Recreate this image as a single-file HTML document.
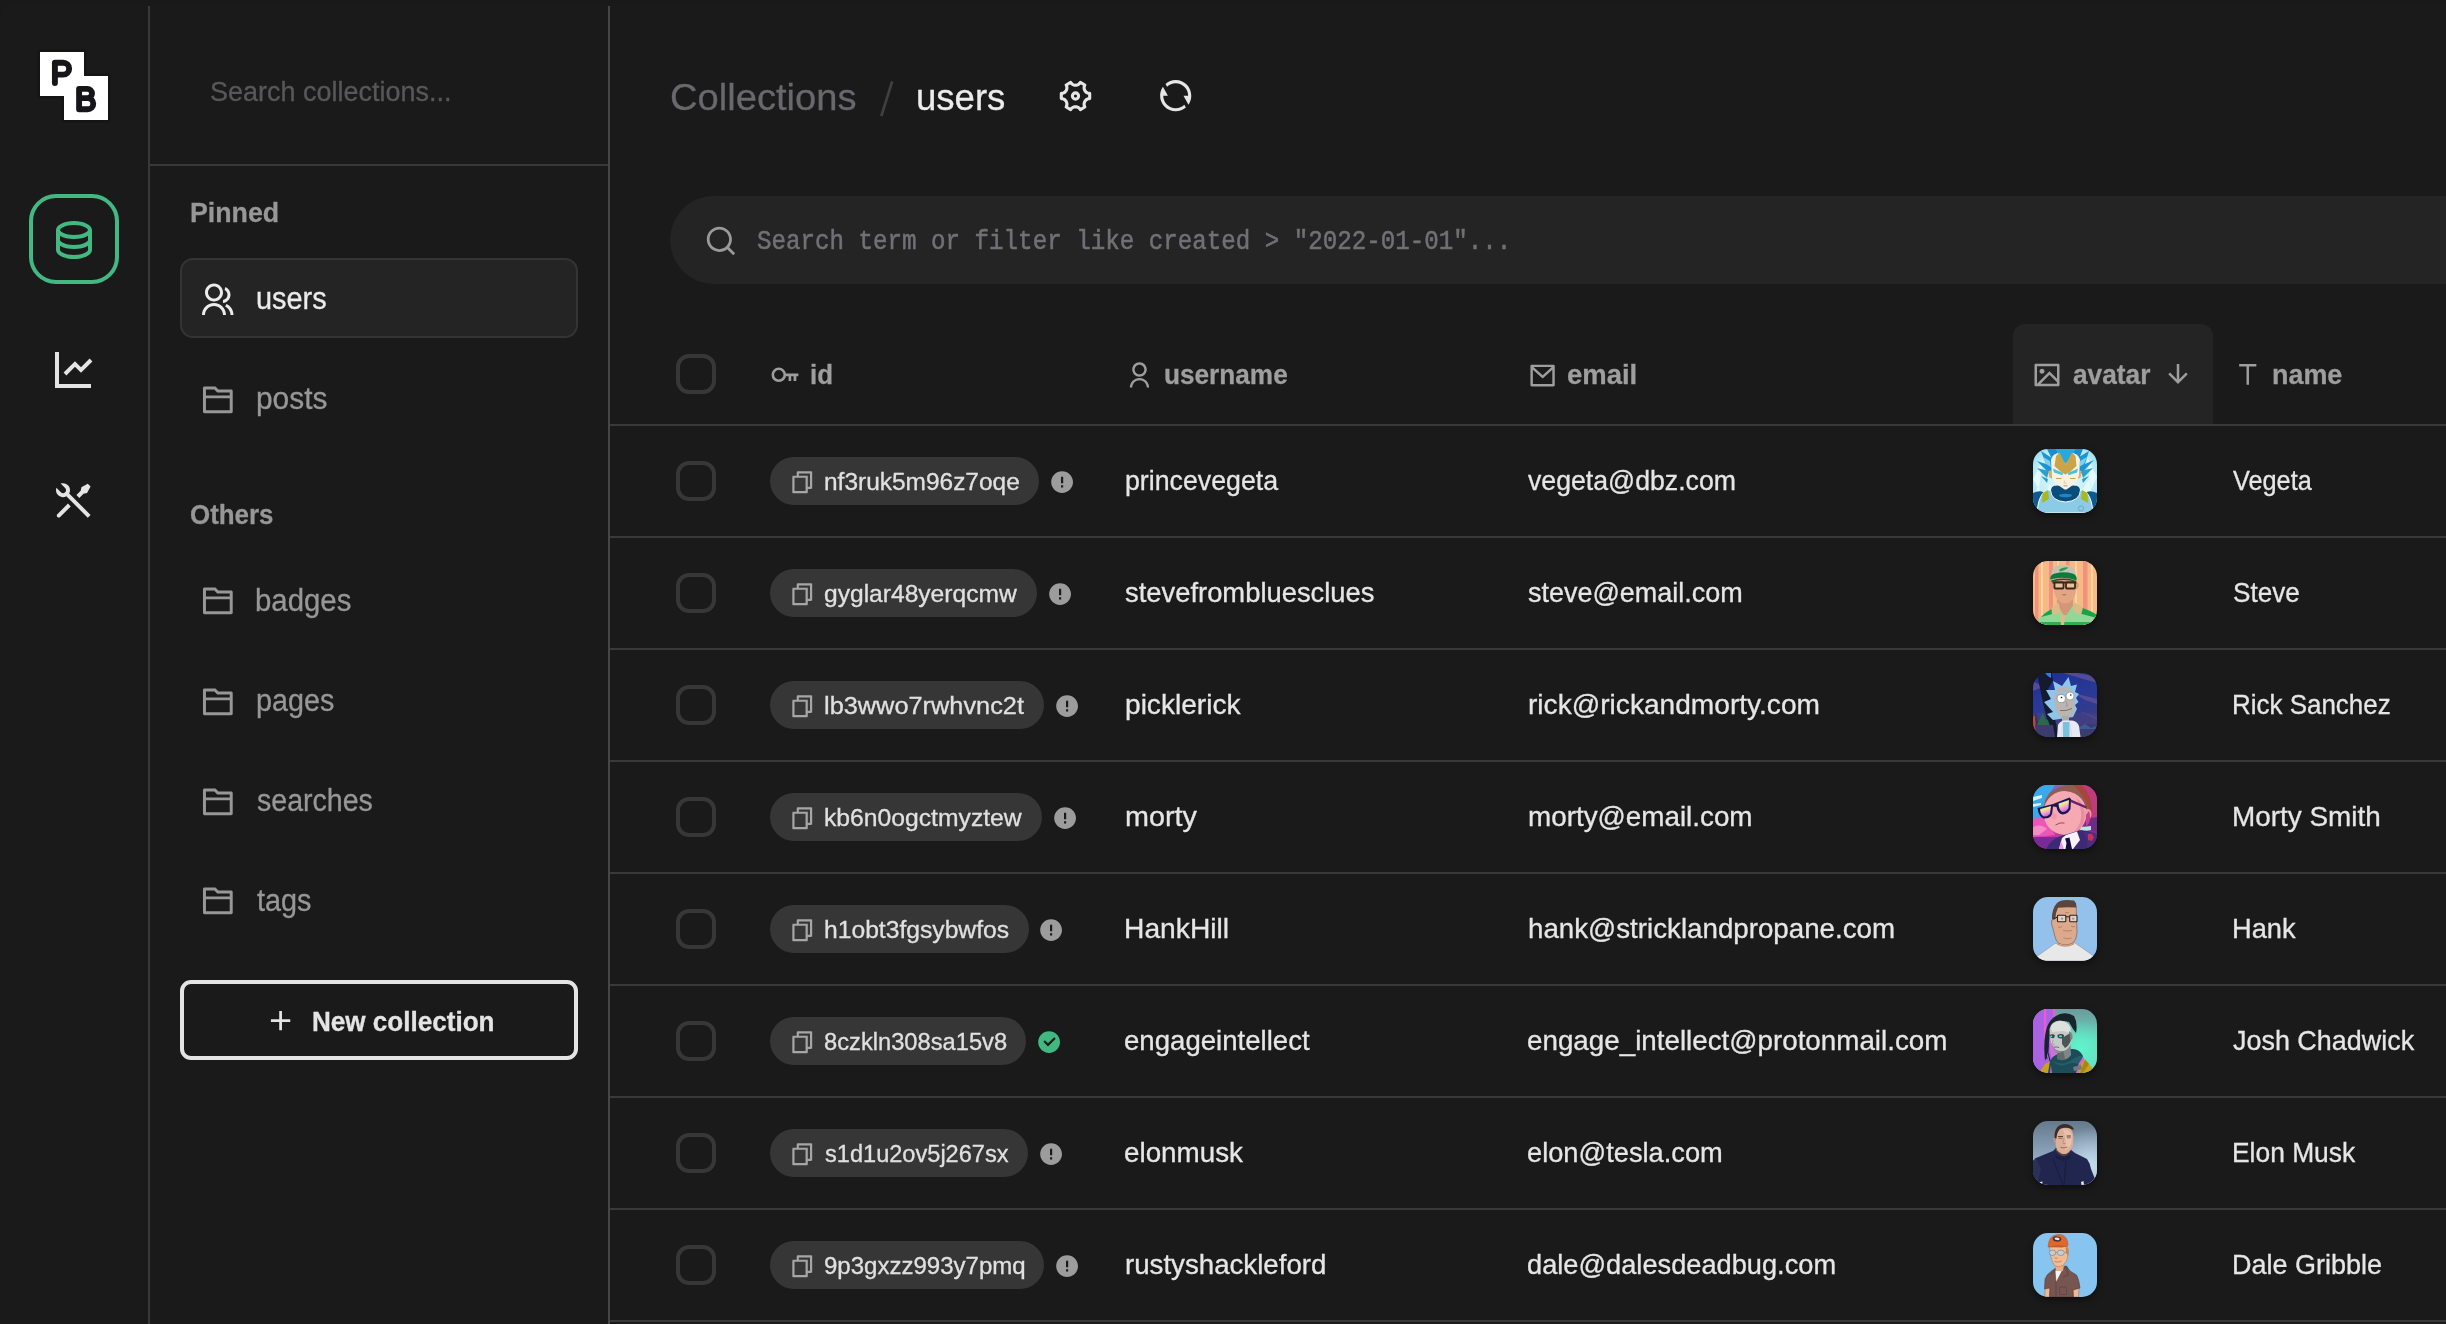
<!DOCTYPE html>
<html lang="en"><head><meta charset="utf-8"><meta name="viewport" content="width=2446"><title>users - PocketBase</title>
<style>
html,body{margin:0;padding:0;background:#1a1a1a;}
body{width:2446px;height:1324px;position:relative;overflow:hidden;font-family:"Liberation Sans", sans-serif;}
.b{position:absolute;box-sizing:border-box}
.i{position:absolute;display:block;overflow:visible}
.t{position:absolute;white-space:nowrap;line-height:1;transform-origin:0 0;display:block;-webkit-text-stroke:0.3px}
.m{font-family:"Liberation Mono", monospace;-webkit-text-stroke:0.55px}
.ln{position:absolute;background:#393939}
.cb{position:absolute;box-sizing:border-box;width:40px;height:40px;border:4px solid #373737;border-radius:13px;left:676px}
.pill{position:absolute;box-sizing:border-box;height:48px;border-radius:24px;background:#363636;left:770px}
.av{position:absolute;width:64px;height:64px;border-radius:15px;overflow:hidden;left:2033px;box-shadow:0 3px 7px rgba(0,0,0,.45)}
.av svg{display:block}

</style></head><body>
<div class="b" style="left:0;top:0;width:2446px;height:6px;background:#191919"></div>
<div class="b" style="left:0;top:6px;width:12px;height:12px;background:#191919"></div>
<div class="b" style="left:0;top:6px;width:24px;height:24px;background:#1a1a1a;border-top-left-radius:10px"></div>
<div class="ln" style="left:148px;top:6px;width:2px;height:1324px"></div>
<div class="ln" style="left:608px;top:6px;width:2px;height:1324px;background:#464646"></div>
<div class="ln" style="left:150px;top:164px;width:458px;height:2px"></div>
<svg class="i" style="left:36px;top:48px" width="76" height="76" viewBox="36 48 76 76"><path fill="#ffffff" stroke="#151517" stroke-width="5" stroke-linejoin="round" d="M40 52H84V76H108V120H64V96H40Z"/><path fill="#ffffff" d="M40 52H84V76H108V120H64V96H40Z"/><g fill="none" stroke="#16161a" stroke-width="5.9" stroke-linecap="round" stroke-linejoin="round"><path d="M54.9 83.1V62.7H63.2A5.95 5.95 0 0 1 63.2 74.6H54.9"/><path d="M79.1 88.9H87.4A4.6 4.6 0 0 1 87.4 98.1H79.1M79.1 98.1H87.7A5.55 5.55 0 0 1 87.7 109.2H79.1V88.9"/></g></svg>
<div class="b" style="left:29px;top:194px;width:90px;height:90px;border:4.3px solid #43b883;border-radius:27px"></div>
<svg class="i" style="left:50.00px;top:215.00px" width="48.00" height="48.00" viewBox="0 0 24 24"><path fill="#43b883"  d="M5 12.5C5 12.8134 5.46101 13.3584 6.53047 13.8931C7.91405 14.5849 9.87677 15 12 15C14.1232 15 16.0859 14.5849 17.4695 13.8931C18.539 13.3584 19 12.8134 19 12.5V10.3287C17.35 11.3482 14.8273 12 12 12C9.17273 12 6.64996 11.3482 5 10.3287V12.5ZM19 15.3287C17.35 16.3482 14.8273 17 12 17C9.17273 17 6.64996 16.3482 5 15.3287V17.5C5 17.8134 5.46101 18.3584 6.53047 18.8931C7.91405 19.5849 9.87677 20 12 20C14.1232 20 16.0859 19.5849 17.4695 18.8931C18.539 18.3584 19 17.8134 19 17.5V15.3287ZM3 17.5V7.5C3 5.01472 7.02944 3 12 3C16.9706 3 21 5.01472 21 7.5V17.5C21 19.9853 16.9706 22 12 22C7.02944 22 3 19.9853 3 17.5ZM12 10C14.1232 10 16.0859 9.58492 17.4695 8.89313C18.539 8.3584 19 7.81342 19 7.5C19 7.18658 18.539 6.6416 17.4695 6.10687C16.0859 5.41508 14.1232 5 12 5C9.87677 5 7.91405 5.41508 6.53047 6.10687C5.46101 6.6416 5 7.18658 5 7.5C5 7.81342 5.46101 8.3584 6.53047 8.89313C7.91405 9.58492 9.87677 10 12 10Z"/></svg>
<svg class="i" style="left:49.00px;top:346.00px" width="48.00" height="48.00" viewBox="0 0 24 24"><path fill="#e4e4e4"  d="M5 3V19H21V21H3V3H5ZM20.2929 6.29289L21.7071 7.70711L16 13.4142L13 10.415L8.70711 14.7071L7.29289 13.2929L13 7.58579L16 10.585L20.2929 6.29289Z"/></svg>
<svg class="i" style="left:50.00px;top:476.50px" width="48.00" height="48.00" viewBox="0 0 24 24"><path fill="#e4e4e4"  d="M5.32943 3.27158C6.56252 2.8332 7.9923 3.10749 8.97927 4.09446C10.1002 5.21537 10.3019 6.90741 9.5843 8.23385L20.293 18.9437L18.8788 20.3579L8.16982 9.64875C6.84325 10.3669 5.15069 10.1654 4.02952 9.04421C3.04227 8.05696 2.7681 6.62665 3.20701 5.39332L5.44373 7.63C6.02952 8.21578 6.97927 8.21578 7.56505 7.63C8.15084 7.04421 8.15084 6.09446 7.56505 5.50868L5.32943 3.27158ZM15.6968 5.15512L18.8788 3.38736L20.293 4.80157L18.5252 7.98355L16.7574 8.3371L14.6361 10.4584L13.2219 9.04421L15.3432 6.92289L15.6968 5.15512ZM8.97927 13.2868L10.3935 14.7011L5.09018 20.0044C4.69966 20.3949 4.06649 20.3949 3.67597 20.0044C3.31334 19.6417 3.28744 19.0699 3.59826 18.6774L3.67597 18.5902L8.97927 13.2868Z"/></svg>
<div class="b" style="left:180px;top:258px;width:398px;height:80px;border:2px solid #343434;border-radius:13px;background:#242424"></div>
<svg class="i" style="left:199.00px;top:282.25px" width="36.00" height="36.00" viewBox="0 0 24 24"><path fill="#ececec"  d="M2 22C2 17.5817 5.58172 14 10 14C14.4183 14 18 17.5817 18 22H16C16 18.6863 13.3137 16 10 16C6.68629 16 4 18.6863 4 22H2ZM10 13C6.685 13 4 10.315 4 7C4 3.685 6.685 1 10 1C13.315 1 16 3.685 16 7C16 10.315 13.315 13 10 13ZM10 11C12.21 11 14 9.21 14 7C14 4.79 12.21 3 10 3C7.79 3 6 4.79 6 7C6 9.21 7.79 11 10 11ZM18.2837 14.7028C21.0644 15.9561 23 18.752 23 22H21C21 19.564 19.5483 17.4671 17.4628 16.5271L18.2837 14.7028ZM17.5962 3.41321C19.5944 4.23703 21 6.20361 21 8.5C21 11.3702 18.8042 13.7252 16 13.9776V11.9646C17.6967 11.7222 19 10.2636 19 8.5C19 7.11935 18.2016 5.92603 17.041 5.35635L17.5962 3.41321Z"/></svg>
<svg class="i" style="left:200.10px;top:381.50px" width="35.70" height="35.70" viewBox="0 0 24 24"><path fill="#979797"  d="M12.4142 5H21C21.5523 5 22 5.44772 22 6V20C22 20.5523 21.5523 21 21 21H3C2.44772 21 2 20.5523 2 20V4C2 3.44772 2.44772 3 3 3H10.4142L12.4142 5ZM20 11H4V19H20V11ZM20 9V7H11.5858L9.58579 5H4V9H20Z"/></svg>
<svg class="i" style="left:200.10px;top:583.20px" width="35.70" height="35.70" viewBox="0 0 24 24"><path fill="#979797"  d="M12.4142 5H21C21.5523 5 22 5.44772 22 6V20C22 20.5523 21.5523 21 21 21H3C2.44772 21 2 20.5523 2 20V4C2 3.44772 2.44772 3 3 3H10.4142L12.4142 5ZM20 11H4V19H20V11ZM20 9V7H11.5858L9.58579 5H4V9H20Z"/></svg>
<svg class="i" style="left:200.10px;top:683.70px" width="35.70" height="35.70" viewBox="0 0 24 24"><path fill="#979797"  d="M12.4142 5H21C21.5523 5 22 5.44772 22 6V20C22 20.5523 21.5523 21 21 21H3C2.44772 21 2 20.5523 2 20V4C2 3.44772 2.44772 3 3 3H10.4142L12.4142 5ZM20 11H4V19H20V11ZM20 9V7H11.5858L9.58579 5H4V9H20Z"/></svg>
<svg class="i" style="left:200.10px;top:783.70px" width="35.70" height="35.70" viewBox="0 0 24 24"><path fill="#979797"  d="M12.4142 5H21C21.5523 5 22 5.44772 22 6V20C22 20.5523 21.5523 21 21 21H3C2.44772 21 2 20.5523 2 20V4C2 3.44772 2.44772 3 3 3H10.4142L12.4142 5ZM20 11H4V19H20V11ZM20 9V7H11.5858L9.58579 5H4V9H20Z"/></svg>
<svg class="i" style="left:200.10px;top:883.40px" width="35.70" height="35.70" viewBox="0 0 24 24"><path fill="#979797"  d="M12.4142 5H21C21.5523 5 22 5.44772 22 6V20C22 20.5523 21.5523 21 21 21H3C2.44772 21 2 20.5523 2 20V4C2 3.44772 2.44772 3 3 3H10.4142L12.4142 5ZM20 11H4V19H20V11ZM20 9V7H11.5858L9.58579 5H4V9H20Z"/></svg>
<div class="b" style="left:180px;top:980px;width:398px;height:80px;border:4.2px solid #e4e4e4;border-radius:11px"></div>
<svg class="i" style="left:263.65px;top:1004.00px" width="33.20" height="33.20" viewBox="0 0 24 24"><path fill="#e4e4e4"  d="M11 11V5H13V11H19V13H13V19H11V13H5V11H11Z"/></svg>
<svg class="i" style="left:870px;top:70px" width="40" height="60" viewBox="870 70 40 60"><path d="M892.2 81.3L881.3 116.2" stroke="#404043" stroke-width="2.7" fill="none"/></svg>
<svg class="i" style="left:0;top:0" width="2446" height="1324" viewBox="0 0 2446 1324"><path d="M1089.70 98.60 L1088.87 98.66 L1088.05 98.85 L1087.27 99.15 L1086.55 99.57 L1085.89 100.09 L1085.32 100.71 L1084.85 101.40 L1084.49 102.15 L1084.24 102.95 L1084.12 103.78 L1084.12 104.62 L1084.24 105.44 L1084.49 106.24 L1084.85 107.00 L1080.35 109.60 L1079.88 108.91 L1079.31 108.29 L1078.65 107.77 L1077.93 107.35 L1077.15 107.05 L1076.33 106.86 L1075.50 106.80 L1074.67 106.86 L1073.85 107.05 L1073.07 107.35 L1072.35 107.77 L1071.69 108.29 L1071.12 108.91 L1070.65 109.60 L1066.15 107.00 L1066.51 106.24 L1066.76 105.44 L1066.88 104.62 L1066.88 103.78 L1066.76 102.95 L1066.51 102.15 L1066.15 101.40 L1065.68 100.71 L1065.11 100.09 L1064.45 99.57 L1063.73 99.15 L1062.95 98.85 L1062.13 98.66 L1061.30 98.60 L1061.30 93.40 L1062.13 93.34 L1062.95 93.15 L1063.73 92.85 L1064.45 92.43 L1065.11 91.91 L1065.68 91.29 L1066.15 90.60 L1066.51 89.85 L1066.76 89.05 L1066.88 88.22 L1066.88 87.38 L1066.76 86.56 L1066.51 85.76 L1066.15 85.00 L1070.65 82.40 L1071.12 83.09 L1071.69 83.71 L1072.35 84.23 L1073.07 84.65 L1073.85 84.95 L1074.67 85.14 L1075.50 85.20 L1076.33 85.14 L1077.15 84.95 L1077.93 84.65 L1078.65 84.23 L1079.31 83.71 L1079.88 83.09 L1080.35 82.40 L1084.85 85.00 L1084.49 85.76 L1084.24 86.56 L1084.12 87.38 L1084.12 88.22 L1084.24 89.05 L1084.49 89.85 L1084.85 90.60 L1085.32 91.29 L1085.89 91.91 L1086.55 92.43 L1087.27 92.85 L1088.05 93.15 L1088.87 93.34 L1089.70 93.40Z" fill="none" stroke="#e6e6e6" stroke-width="3.1" stroke-linejoin="round"/><circle cx="1075.5" cy="96" r="3.1" fill="none" stroke="#e6e6e6" stroke-width="3.1"/></svg>
<svg class="i" style="left:1156.80px;top:77.20px" width="37.40" height="37.40" viewBox="0 0 24 24"><path fill="#e6e6e6"  d="M5.46257 4.43262C7.21556 2.91688 9.5007 2 12 2C17.5228 2 22 6.47715 22 12C22 14.1361 21.3302 16.1158 20.1892 17.7406L17 12H20C20 7.58172 16.4183 4 12 4C9.84982 4 7.89777 4.84827 6.46023 6.22842L5.46257 4.43262ZM18.5374 19.5674C16.7844 21.0831 14.4993 22 12 22C6.47715 22 2 17.5228 2 12C2 9.86386 2.66979 7.88416 3.8108 6.25944L7 12H4C4 16.4183 7.58172 20 12 20C14.1502 20 16.1022 19.1517 17.5398 17.7716L18.5374 19.5674Z"/></svg>
<div class="b" style="left:670px;top:196px;width:2446px;height:88px;border-radius:44px;background:#242424"></div>
<svg class="i" style="left:703.60px;top:224.20px" width="33.50" height="33.50" viewBox="0 0 24 24"><path fill="#9a9a9a"  d="M18.031 16.6168L22.3137 20.8995L20.8995 22.3137L16.6168 18.031C15.0769 19.263 13.124 20 11 20C6.032 20 2 15.968 2 11C2 6.032 6.032 2 11 2C15.968 2 20 6.032 20 11C20 13.124 19.263 15.0769 18.031 16.6168ZM16.0247 15.8748C17.2475 14.6146 18 12.8956 18 11C18 7.1325 14.8675 4 11 4C7.1325 4 4 7.1325 4 11C4 14.8675 7.1325 18 11 18C12.8956 18 14.6146 17.2475 15.8748 16.0247L16.0247 15.8748Z"/></svg>
<div class="b" style="left:2013px;top:324px;width:200px;height:101px;background:#242424;border-radius:12px 12px 0 0"></div>
<div class="ln" style="left:610px;top:424px;width:2446px;height:2px"></div>
<div class="ln" style="left:610px;top:536px;width:2446px;height:2px"></div>
<div class="ln" style="left:610px;top:648px;width:2446px;height:2px"></div>
<div class="ln" style="left:610px;top:760px;width:2446px;height:2px"></div>
<div class="ln" style="left:610px;top:872px;width:2446px;height:2px"></div>
<div class="ln" style="left:610px;top:984px;width:2446px;height:2px"></div>
<div class="ln" style="left:610px;top:1096px;width:2446px;height:2px"></div>
<div class="ln" style="left:610px;top:1208px;width:2446px;height:2px"></div>
<div class="ln" style="left:610px;top:1320px;width:2446px;height:2px"></div>
<svg class="i" style="left:768px;top:362px" width="36" height="26" viewBox="768 362 36 26"><circle cx="778.8" cy="374.8" r="6.0" fill="none" stroke="#9e9e9e" stroke-width="2.6"/><path d="M785.4 373.4H798.4V376.2H796.3V381H793.6V376.2H791.2V381H788.6V376.2H785.4Z" fill="#9e9e9e"/></svg>
<svg class="i" style="left:1124.75px;top:360.60px" width="29.00" height="29.00" viewBox="0 0 24 24"><path fill="#9e9e9e"  d="M4 22C4 17.5817 7.58172 14 12 14C16.4183 14 20 17.5817 20 22H18C18 18.6863 15.3137 16 12 16C8.68629 16 6 18.6863 6 22H4ZM12 13C8.685 13 6 10.315 6 7C6 3.685 8.685 1 12 1C15.315 1 18 3.685 18 7C18 10.315 15.315 13 12 13ZM12 11C14.21 11 16 9.21 16 7C16 4.79 14.21 3 12 3C9.79 3 8 4.79 8 7C8 9.21 9.79 11 12 11Z"/></svg>
<svg class="i" style="left:1527.90px;top:360.70px" width="29.20" height="29.20" viewBox="0 0 24 24"><path fill="#9e9e9e"  d="M3 3H21C21.5523 3 22 3.44772 22 4V20C22 20.5523 21.5523 21 21 21H3C2.44772 21 2 20.5523 2 20V4C2 3.44772 2.44772 3 3 3ZM20 7.23792L12.0718 14.338L4 7.21594V19H20V7.23792ZM4.51146 5L12.0619 11.662L19.501 5H4.51146Z"/></svg>
<svg class="i" style="left:2032.20px;top:360.30px" width="30.00" height="30.00" viewBox="0 0 24 24"><path fill="#9e9e9e"  d="M4.82843 21L4.80799 21.0204L4.78752 21H2.99168C2.44407 21 2 20.5551 2 20.0066V3.9934C2 3.44476 2.45531 3 2.9918 3H21.0082C21.556 3 22 3.44495 22 3.9934V20.0066C22 20.5552 21.5447 21 21.0082 21H4.82843ZM20 15V5H4V19L14 9L20 15ZM20 17.8284L14 11.8284L6.82843 19H20V17.8284ZM8 11C6.89543 11 6 10.1046 6 9C6 7.89543 6.89543 7 8 7C9.10457 7 10 7.89543 10 9C10 10.1046 9.10457 11 8 11Z"/></svg>
<svg class="i" style="left:2163.30px;top:359.30px" width="30.00" height="30.00" viewBox="0 0 24 24"><path fill="#9e9e9e"  d="M13.0001 16.1716L18.3641 10.8076L19.7783 12.2218L12.0001 20L4.22192 12.2218L5.63614 10.8076L11.0001 16.1716V4H13.0001V16.1716Z"/></svg>
<svg class="i" style="left:2232.80px;top:359.30px" width="29.50" height="29.50" viewBox="0 0 24 24"><path fill="#9e9e9e"  d="M13 6V21H11V6H5V4H19V6H13Z"/></svg>
<div class="cb" style="top:354px"></div>
<div class="cb" style="top:461px"></div>
<div class="pill" style="top:457px;width:268.9px"></div>
<svg class="i" style="left:788.60px;top:468.50px" width="26.50" height="26.50" viewBox="0 0 24 24"><path fill="#a6a6a6"  d="M6.9998 6V3C6.9998 2.44772 7.44752 2 7.9998 2H19.9998C20.5521 2 20.9998 2.44772 20.9998 3V17C20.9998 17.5523 20.5521 18 19.9998 18H16.9998V20.9991C16.9998 21.5519 16.5499 22 15.993 22H4.00666C3.45059 22 3 21.5554 3 20.9991L3.0026 7.00087C3.0027 6.44811 3.45264 6 4.00942 6H6.9998ZM5.00242 8L5.00019 20H14.9998V8H5.00242ZM8.9998 6H16.9998V16H18.9998V4H8.9998V6Z"/></svg>
<svg class="i" style="left:1048.70px;top:469.00px" width="26.20" height="26.20" viewBox="0 0 24 24"><path fill="#9c9c9c"  d="M12 22C6.47715 22 2 17.5228 2 12C2 6.47715 6.47715 2 12 2C17.5228 2 22 6.47715 22 12C22 17.5228 17.5228 22 12 22ZM11 15V17H13V15H11ZM11 7V13H13V7H11Z"/></svg>
<div class="av" style="top:449px"><svg width="64" height="64" viewBox="0 0 64 64"><defs><radialGradient id="vg" cx=".5" cy=".45" r=".75"><stop offset="0" stop-color="#e6fbff"/><stop offset=".6" stop-color="#bfeef8"/><stop offset="1" stop-color="#6fd0ec"/></radialGradient></defs><rect width="64" height="64" fill="url(#vg)"/><path d="M0 30L10 10L6 40ZM64 28L54 8L58 40ZM12 64L16 34L22 44ZM50 40L56 30L60 52ZM0 50L6 36L8 56Z" fill="#f2fdff" opacity=".7"/><path d="M19 27L4 12L13 15L8 2L19 9L21 0H44L46 8L56 2L52 15L61 11L46 27L47 10L40 3L32.500 15L25 3L18 10Z" fill="#1e95d0"/><path d="M14 0H50L46 10L40 3L32.500 15L25 3L19 10Z" fill="#1b8ccc"/><path d="M22 0L27 6L32.500 15L38 6L43 0Z" fill="#2aa8dc"/><path d="M16 22L4 19L14 29ZM48 22L60 19L50 29ZM15 30L8 27L14 34ZM49 30L56 27L50 34Z" fill="#2c9ed0"/><path d="M10 8L13 15L18 18L17 12ZM54 8L51 15L46 18L47 12Z" fill="#7fd0ee"/><path d="M0 44Q6 41 10 43L7 64H0ZM64 44Q58 41 54 43L57 64H64Z" fill="#0f5a8c"/><path d="M4 64Q5 50 10 44L15 41L49 41L54 44Q59 50 60 64Z" fill="#8ccbe6" stroke="#f4ffff" stroke-width="1"/><path d="M9.500 44L15 41L16 50L9 54ZM54.500 44L49 41L48 50L55 54Z" fill="#a9b820"/><path d="M17.500 41Q18 36 24 36H41Q47 36 47.500 41Q47 52 32.500 53Q18 52 17.500 41Z" fill="#0a4c7c" stroke="#f4ffff" stroke-width="1"/><ellipse cx="32.500" cy="46.500" rx="6.500" ry="1.800" fill="#1f86c4"/><path d="M15.500 22L19 21L19 30L16 28ZM48.500 22L45 21L45 30L48 28Z" fill="#d8b070"/><path d="M18.500 12Q18 6 24 4.500L32.500 15L41 4.500Q47 6 46.500 12L46 26Q44.500 32 40 36L33.500 40.500H31.500L25 36Q20.500 32 19 26Z" fill="#f8f1de"/><path d="M23 7L26.500 3.500L32.500 15.500L39 3.500L42.500 7L43.500 17L37 23L32.500 25.500L28 23L21.500 17Z" fill="#c9a449"/><path d="M20 19.500L30 24L29.500 26.200L21 23.500ZM45 19.500L35 24L35.500 26.200L44 23.500Z" fill="#41c3e4"/><path d="M23 29.500H28.500M37 29.500H42.500" stroke="#c9a449" stroke-width="1"/><path d="M31.500 31.500L31 34H33.500" stroke="#c9b28a" stroke-width=".6" fill="none"/><path d="M30.500 36.800H34.500" stroke="#b98f6a" stroke-width=".9"/><circle cx="48" cy="59.500" r="2.600" fill="none" stroke="#5f93a8" stroke-width=".6"/></svg></div>
<div class="cb" style="top:573px"></div>
<div class="pill" style="top:569px;width:266.8px"></div>
<svg class="i" style="left:788.60px;top:580.50px" width="26.50" height="26.50" viewBox="0 0 24 24"><path fill="#a6a6a6"  d="M6.9998 6V3C6.9998 2.44772 7.44752 2 7.9998 2H19.9998C20.5521 2 20.9998 2.44772 20.9998 3V17C20.9998 17.5523 20.5521 18 19.9998 18H16.9998V20.9991C16.9998 21.5519 16.5499 22 15.993 22H4.00666C3.45059 22 3 21.5554 3 20.9991L3.0026 7.00087C3.0027 6.44811 3.45264 6 4.00942 6H6.9998ZM5.00242 8L5.00019 20H14.9998V8H5.00242ZM8.9998 6H16.9998V16H18.9998V4H8.9998V6Z"/></svg>
<svg class="i" style="left:1046.60px;top:581.00px" width="26.20" height="26.20" viewBox="0 0 24 24"><path fill="#9c9c9c"  d="M12 22C6.47715 22 2 17.5228 2 12C2 6.47715 6.47715 2 12 2C17.5228 2 22 6.47715 22 12C22 17.5228 17.5228 22 12 22ZM11 15V17H13V15H11ZM11 7V13H13V7H11Z"/></svg>
<div class="av" style="top:561px"><svg width="64" height="64" viewBox="0 0 64 64"><rect width="64" height="64" fill="#f8ba84"/><path d="M2 0h3.500v64H2zM16 0h4v64h-4zM33 0h3.500v64H33zM50 0h4.500v64H50z" fill="#f0927c"/><path d="M8 0h2v64H8zM24 0h2v64h-2zM42 0h2v64h-2zM58 0h2v64h-2z" fill="#fdd3a2"/><path d="M24 36H40V54H24Z" fill="#d49676"/><path d="M3 64Q5 56 17 49L25 45L32 56L41 43L50 47Q60 51 64 54V64Z" fill="#8fd896"/><path d="M17 49L25 45L27 51L8 56Q11 52 17 49ZM41 43L50 47Q60 51 64 54V57L45 52Z" fill="#19a349"/><path d="M3 64L4 61H64V64Z" fill="#2cae55"/><path d="M18.500 47L25.500 41.500L28 52L19 54ZM41 41L50 46.500L48 54L40 50Z" fill="#dcbb8b"/><path d="M27 52L32 55L31 64H28Z" fill="#dcbb8b"/><path d="M28 46L32 55L36 46Z" fill="#d49676"/><path d="M20.500 18Q20 14 32 14Q43.500 14 43.500 19L43 30Q42 37 37 41Q32 44 27 41Q22 37 21 30Z" fill="#e3a685"/><path d="M19 22Q18 22 18.500 26L21 29V22ZM45 22Q46 22 45.500 26L43 29V22Z" fill="#d99878"/><path d="M18.500 16Q17.500 4 30.500 3.800Q43.500 4 42.800 16Z" fill="#c3c2b5"/><path d="M17.300 18.500Q16.500 13.500 23 12.300Q31 10.200 39.500 12.500Q44.500 14 43.600 19.500Q31 14.800 17.300 18.500Z" fill="#0b7c3d"/><path d="M18.300 19.500Q31 15.500 43 20L43 21Q31 17 18.500 21Z" fill="#0a5a2e"/><path d="M26 8.800Q30 5.200 35.500 6.600Q33 9.400 27 10.400Z" fill="#2f9e4a"/><path d="M19.500 20.500H43.500V22.500H19.500Z" fill="#3a2519"/><rect x="21.500" y="21.500" width="9" height="6" rx="1" fill="#e9c09c" stroke="#3a2519" stroke-width="1.800"/><rect x="33" y="21.500" width="9" height="6" rx="1" fill="#e9c09c" stroke="#3a2519" stroke-width="1.800"/><path d="M28.500 33.500Q31 32.500 34 33.500Q31 35.500 28.500 33.500Z" fill="#c0706a"/></svg></div>
<div class="cb" style="top:685px"></div>
<div class="pill" style="top:681px;width:273.8px"></div>
<svg class="i" style="left:788.60px;top:692.50px" width="26.50" height="26.50" viewBox="0 0 24 24"><path fill="#a6a6a6"  d="M6.9998 6V3C6.9998 2.44772 7.44752 2 7.9998 2H19.9998C20.5521 2 20.9998 2.44772 20.9998 3V17C20.9998 17.5523 20.5521 18 19.9998 18H16.9998V20.9991C16.9998 21.5519 16.5499 22 15.993 22H4.00666C3.45059 22 3 21.5554 3 20.9991L3.0026 7.00087C3.0027 6.44811 3.45264 6 4.00942 6H6.9998ZM5.00242 8L5.00019 20H14.9998V8H5.00242ZM8.9998 6H16.9998V16H18.9998V4H8.9998V6Z"/></svg>
<svg class="i" style="left:1053.60px;top:693.00px" width="26.20" height="26.20" viewBox="0 0 24 24"><path fill="#9c9c9c"  d="M12 22C6.47715 22 2 17.5228 2 12C2 6.47715 6.47715 2 12 2C17.5228 2 22 6.47715 22 12C22 17.5228 17.5228 22 12 22ZM11 15V17H13V15H11ZM11 7V13H13V7H11Z"/></svg>
<div class="av" style="top:673px"><svg width="64" height="64" viewBox="0 0 64 64"><defs><linearGradient id="rk" x1="0" y1="0" x2=".3" y2="1"><stop offset="0" stop-color="#1f2f92"/><stop offset=".55" stop-color="#293a96"/><stop offset="1" stop-color="#3c3c80"/></linearGradient></defs><rect width="64" height="64" fill="url(#rk)"/><path d="M30 0L64 10V4L44 0ZM40 20L64 26V31L52 27ZM0 8L10 14L0 18ZM46 38L64 44V47Z" fill="#5d4f95" opacity=".85"/><path d="M0 40H64V64H0Z" fill="#48417f" opacity=".55"/><path d="M44 53Q54 49 64 52V64H44Z" fill="#3b3c6e"/><path d="M46 54L52 51L58 55L64 53V56H46Z" fill="#3b5a9c"/><path d="M4 0H19L20 8L15 16L18 30L22 46L26 64H18L10 30Z" fill="#141a30"/><path d="M0 44L3 40L8 64H0Z" fill="#2a3560"/><path d="M0 44L2 42L3 60L0 62Z" fill="#c0453c"/><path d="M12 0H18L18 5Q15 4 12 0Z" fill="#2b7df0"/><path d="M4 52L9.500 40L15 52ZM12 53L14.500 46L17 53Z" fill="#2a6a4a"/><path d="M2 52H20L22 64H4Z" fill="#3d3a6e"/><path d="M20 47L14 41L20 39L11 29L18 26L13 17L22 17L20 8L29 13L35.500 4L38 13L44 11.500L42 19L46 21L43 25L45.500 29L42 32L44 36L40 44Z" fill="#8dc6ea"/><path d="M21.500 28Q21 14 31 13.500Q40 14 41.500 26Q43 38 38 43Q33 47 28 44Q22 40 21.500 28Z" fill="#b9b5b1"/><path d="M24.500 21Q31 17 38.500 19.500L38.500 21.500Q31 19.500 25 23Z" fill="#8dc6ea"/><circle cx="28.200" cy="25.500" r="4.100" fill="#ffffff" stroke="#6d6a6a" stroke-width=".5"/><circle cx="37" cy="23" r="4" fill="#ffffff" stroke="#6d6a6a" stroke-width=".5"/><circle cx="28.500" cy="24.500" r=".8" fill="#111"/><circle cx="37.800" cy="22" r=".8" fill="#111"/><path d="M27 37.500Q33 38.500 39 35.500" stroke="#5d5857" stroke-width=".7" fill="none"/><path d="M33 28L34.500 33H32.500" stroke="#8d8886" stroke-width=".6" fill="none"/><path d="M29 43H36V50H29Z" fill="#aeaaa6"/><path d="M24 64L25 52Q27 48 31 47.500H39Q44 48 46 53L47.500 64Z" fill="#e8e9f4"/><path d="M30 49H36.500L36.500 64H30Z" fill="#78c2dd"/><path d="M30 49L28 64M36.500 49L39 64" stroke="#c9cbe0" stroke-width=".6"/></svg></div>
<div class="cb" style="top:797px"></div>
<div class="pill" style="top:793px;width:271.8px"></div>
<svg class="i" style="left:788.60px;top:804.50px" width="26.50" height="26.50" viewBox="0 0 24 24"><path fill="#a6a6a6"  d="M6.9998 6V3C6.9998 2.44772 7.44752 2 7.9998 2H19.9998C20.5521 2 20.9998 2.44772 20.9998 3V17C20.9998 17.5523 20.5521 18 19.9998 18H16.9998V20.9991C16.9998 21.5519 16.5499 22 15.993 22H4.00666C3.45059 22 3 21.5554 3 20.9991L3.0026 7.00087C3.0027 6.44811 3.45264 6 4.00942 6H6.9998ZM5.00242 8L5.00019 20H14.9998V8H5.00242ZM8.9998 6H16.9998V16H18.9998V4H8.9998V6Z"/></svg>
<svg class="i" style="left:1051.60px;top:805.00px" width="26.20" height="26.20" viewBox="0 0 24 24"><path fill="#9c9c9c"  d="M12 22C6.47715 22 2 17.5228 2 12C2 6.47715 6.47715 2 12 2C17.5228 2 22 6.47715 22 12C22 17.5228 17.5228 22 12 22ZM11 15V17H13V15H11ZM11 7V13H13V7H11Z"/></svg>
<div class="av" style="top:785px"><svg width="64" height="64" viewBox="0 0 64 64"><defs><linearGradient id="mt" x1="0" y1="0" x2="1" y2="1"><stop offset="0" stop-color="#5a7be0"/><stop offset=".5" stop-color="#d13da2"/><stop offset="1" stop-color="#5c2486"/></linearGradient><linearGradient id="ml" x1="0" y1="0" x2=".4" y2="1"><stop offset="0" stop-color="#58b6f0"/><stop offset=".4" stop-color="#f3ec8e"/><stop offset=".75" stop-color="#f39ad0"/><stop offset="1" stop-color="#c86ae0"/></linearGradient></defs><rect width="64" height="64" fill="url(#mt)"/><path d="M0 6Q6 2 12 0H22L12 16L8 34L0 36Z" fill="#3aa9ea"/><path d="M0 12L9 10V13L0 16ZM0 19L8 18V20L0 22Z" fill="#d5f4f4"/><path d="M0 0H12Q5 2 0 8Z" fill="#c8ecec"/><path d="M0 34Q8 30 14 36L22 50L0 52Z" fill="#ee55b8"/><path d="M0 42Q8 38 14 44L6 50L0 50Z" fill="#f58cc8"/><path d="M0 52H30V64H0Z" fill="#7a2a98"/><path d="M46 0H64V40L52 20Z" fill="#c03a7c"/><path d="M52 0H58L64 6V0Z" fill="#3aa9ea"/><path d="M54 34L64 32V46L50 44Z" fill="#6d2b86"/><path d="M48 42L58 41V45L46 47Z" fill="#b8e4e4"/><path d="M11 22Q12 4 34 0H44Q58 8 58 30L54 40Q50 20 34 8Q20 8 12 26Z" fill="#8f5e52"/><path d="M40 0H48Q60 10 59 30L57 36Q56 14 40 0Z" fill="#a5453e"/><ellipse cx="32" cy="28" rx="21.500" ry="22" transform="rotate(-18 32 28)" fill="#f5aab3"/><path d="M42 12Q52 18 52 32Q50 44 40 48Q50 38 48 26Q46 16 42 12Z" fill="#e98da0"/><ellipse cx="55" cy="29" rx="3.500" ry="5" fill="#f19aaa"/><path d="M56 38Q58 32 56 26L53 30V42Z" fill="#c8408c"/><path d="M38 14.500L54 21.500L53 23.500L37.500 17Z" fill="#6a1f70"/><path d="M4.500 23L20 19L36.500 12.500L38 14L37.500 24Q35 29 29.500 29.500Q24.500 28.500 23.500 22L20 21.500L19 30Q16 34 10.500 33.500Q5.500 31.500 4.500 23Z" fill="#1d1552"/><path d="M7 24L18 21L17 29Q14 32 11 31.500Q7.500 30 7 24Z" fill="url(#ml)"/><path d="M25.500 18.500L36 15L35.500 23Q33.500 27 29.500 27Q26 26 25.500 18.500Z" fill="url(#ml)"/><ellipse cx="21" cy="31.500" rx="2.800" ry="3.300" fill="#f795ae"/><path d="M22.500 40Q27 37 31.500 38" stroke="#8f3d5a" stroke-width=".9" fill="none"/><path d="M13 64Q18 54 28 51L48 45Q58 46 64 50V64Z" fill="#3d2a74"/><path d="M50 47Q58 47 64 50V64H54Q56 54 50 47Z" fill="#4f2c80"/><path d="M55 49L58.500 48.500L61 52L59 56L55 55Z" fill="#c8305a"/><path d="M26 64L29 53L33 50L44 46.500L47 55L40 64Z" fill="#fbf3fb"/><path d="M32 53.500L36.500 52.500L39 64H32.500L33.500 58Z" fill="#161040"/><path d="M26 64L28 56L31 64Z" fill="#e59ad6"/></svg></div>
<div class="cb" style="top:909px"></div>
<div class="pill" style="top:905px;width:258.5px"></div>
<svg class="i" style="left:788.60px;top:916.50px" width="26.50" height="26.50" viewBox="0 0 24 24"><path fill="#a6a6a6"  d="M6.9998 6V3C6.9998 2.44772 7.44752 2 7.9998 2H19.9998C20.5521 2 20.9998 2.44772 20.9998 3V17C20.9998 17.5523 20.5521 18 19.9998 18H16.9998V20.9991C16.9998 21.5519 16.5499 22 15.993 22H4.00666C3.45059 22 3 21.5554 3 20.9991L3.0026 7.00087C3.0027 6.44811 3.45264 6 4.00942 6H6.9998ZM5.00242 8L5.00019 20H14.9998V8H5.00242ZM8.9998 6H16.9998V16H18.9998V4H8.9998V6Z"/></svg>
<svg class="i" style="left:1038.35px;top:917.00px" width="26.20" height="26.20" viewBox="0 0 24 24"><path fill="#9c9c9c"  d="M12 22C6.47715 22 2 17.5228 2 12C2 6.47715 6.47715 2 12 2C17.5228 2 22 6.47715 22 12C22 17.5228 17.5228 22 12 22ZM11 15V17H13V15H11ZM11 7V13H13V7H11Z"/></svg>
<div class="av" style="top:897px"><svg width="64" height="64" viewBox="0 0 64 64"><rect width="64" height="64" fill="#94c1ec"/><path d="M2.500 64L4.500 59L22 46.500L42 46L60 58.500L62.500 64Z" fill="#e8e8e8" stroke="#7f8fa0" stroke-width=".5"/><path d="M22 9H43.200L44 36Q43.500 43 40 46Q33 49.500 26 46.500Q22.500 44 21.500 38L19.500 30Q18 28 18.800 23L22 22Z" fill="#dca98b" stroke="#5b4537" stroke-width=".5"/><path d="M24 46Q32 50.500 41 46L41 47.500Q32 52 24 47.500Z" fill="#c9977a"/><path d="M19 22.500Q18.500 12 24 6Q27 3.200 34 3L41 3.500L43.200 6.500L43.300 10.500Q32 9.800 25 10.800Q22.500 16 22.200 21.500Z" fill="#5b463c"/><rect x="24.500" y="18.200" width="8.300" height="6.600" rx=".8" fill="#e6d3c7" stroke="#2a2220" stroke-width="1.100"/><rect x="36.700" y="18.200" width="7.300" height="6.600" rx=".8" fill="#e6d3c7" stroke="#2a2220" stroke-width="1.100"/><path d="M32.800 19.800H36.700M24.500 20L20.500 22" stroke="#2a2220" stroke-width="1"/><circle cx="29" cy="21.600" r="1.200" fill="#8e9aa4"/><circle cx="40.200" cy="21.600" r="1.200" fill="#8e9aa4"/><path d="M30 33.500Q34 34.500 39 33.500M30.500 41Q34.500 42.500 38.500 41M25 30Q27 31 29 29.500M38 29Q40 30.500 42 29.500M32 16Q34 14.800 36 16" stroke="#8a634f" stroke-width=".5" fill="none"/></svg></div>
<div class="cb" style="top:1021px"></div>
<div class="pill" style="top:1017px;width:256.3px"></div>
<svg class="i" style="left:788.60px;top:1028.50px" width="26.50" height="26.50" viewBox="0 0 24 24"><path fill="#a6a6a6"  d="M6.9998 6V3C6.9998 2.44772 7.44752 2 7.9998 2H19.9998C20.5521 2 20.9998 2.44772 20.9998 3V17C20.9998 17.5523 20.5521 18 19.9998 18H16.9998V20.9991C16.9998 21.5519 16.5499 22 15.993 22H4.00666C3.45059 22 3 21.5554 3 20.9991L3.0026 7.00087C3.0027 6.44811 3.45264 6 4.00942 6H6.9998ZM5.00242 8L5.00019 20H14.9998V8H5.00242ZM8.9998 6H16.9998V16H18.9998V4H8.9998V6Z"/></svg>
<svg class="i" style="left:1036.10px;top:1029.00px" width="26.20" height="26.20" viewBox="0 0 24 24"><path fill="#3fb981"  d="M12 22C6.47715 22 2 17.5228 2 12C2 6.47715 6.47715 2 12 2C17.5228 2 22 6.47715 22 12C22 17.5228 17.5228 22 12 22ZM11.0026 16L18.0737 8.92893L16.6595 7.51472L11.0026 13.1716L8.17421 10.3431L6.75999 11.7574L11.0026 16Z"/></svg>
<div class="av" style="top:1009px"><svg width="64" height="64" viewBox="0 0 64 64"><defs><linearGradient id="jb" x1="0" y1="0" x2="0" y2="1"><stop offset="0" stop-color="#6b9a9d"/><stop offset=".5" stop-color="#67d4bb"/><stop offset="1" stop-color="#6fd8c0"/></linearGradient><radialGradient id="jg" cx=".75" cy=".62" r=".45"><stop offset="0" stop-color="#5ff5cc"/><stop offset="1" stop-color="#5ff5cc" stop-opacity="0"/></radialGradient></defs><rect width="64" height="64" fill="url(#jb)"/><rect width="64" height="64" fill="url(#jg)"/><path d="M0 0H21L22 20L26 40L10 64H0Z" fill="#ab62e2"/><path d="M11 0H13.200V30H11ZM20 0H22.300V8H20Z" fill="#e35fd2"/><path d="M17 30Q20 40 26 48L20 52Q16 44 17 30Z" fill="#d76be0"/><path d="M6 64L12 55L18 52L20 64ZM44 64L47 54L52 50.500L62 62V64Z" fill="#c8a11f"/><path d="M52 50.500L56 55L50 64H47Z" fill="#a88516"/><path d="M15 64L17 52Q20 46 26 45L38 40Q46 39 50 47L47 56L45 64Z" fill="#1c4c58"/><path d="M20 52Q30 58 40 50Q46 46 50 47L47 56Q40 52 32 56Q25 58 20 52Z" fill="#245e68"/><path d="M43 64L46 54L50 48L51.500 50L47.500 56L45.500 64ZM17 64L17.800 56L19 64Z" fill="#d860d8"/><path d="M40 58L48 56L49 60L41 62Z" fill="#6e7a80"/><path d="M24 38L37 34L38 46Q32 54 24 50Z" fill="#5f6a6a"/><path d="M30 40L37 36L38 46Q35 50 32 50Z" fill="#7d8886"/><path d="M12 52Q10 30 14 18Q18 8 27 5Q35 3 41 7Q45 14 43 24L40 20L36 13Q26 10 18 17L16 32Q16 44 12 52Z" fill="#19232b"/><path d="M13 30Q11 40 14 50M15 34Q14 44 17 52" stroke="#19232b" stroke-width="1" fill="none"/><path d="M16.500 20Q18 12 27 11.500Q36 12 38 20L38.500 30Q38 38 33 41Q27 44 22 40L18 34Q16 28 16.500 20Z" fill="#c5cac6"/><path d="M18 17Q22 12 28 12Q35 12.500 37.500 19L37 24L30 22L19 23Z" fill="#dde0dc"/><path d="M36 22Q40 24 39.500 29L37 33L36 28Z" fill="#8c7e78"/><path d="M29 29L36.500 24.500L37.500 32Q36 37 32 39L29 35Z" fill="#4c5657"/><path d="M16.500 26Q20 24.500 22 26.500L21 29Q18 29.500 16.800 28ZM24.500 26Q28 24 31 26L30.500 29Q27 30 24.800 28.500Z" fill="#4a3a3e"/><ellipse cx="27.500" cy="27.200" rx="1.600" ry="1" fill="#3fe6f4"/><ellipse cx="18.300" cy="27.400" rx="1.100" ry=".9" fill="#3fe6f4"/><path d="M20 31L19.500 35L22 36" stroke="#8f9894" stroke-width=".7" fill="none"/><path d="M21 38.200Q23.500 37.500 26 38.500" stroke="#6c5a5c" stroke-width=".9" fill="none"/><path d="M18 36Q22 44 30 42Q26 46 21 42Z" fill="#8b9492"/></svg></div>
<div class="cb" style="top:1133px"></div>
<div class="pill" style="top:1129px;width:258.0px"></div>
<svg class="i" style="left:788.60px;top:1140.50px" width="26.50" height="26.50" viewBox="0 0 24 24"><path fill="#a6a6a6"  d="M6.9998 6V3C6.9998 2.44772 7.44752 2 7.9998 2H19.9998C20.5521 2 20.9998 2.44772 20.9998 3V17C20.9998 17.5523 20.5521 18 19.9998 18H16.9998V20.9991C16.9998 21.5519 16.5499 22 15.993 22H4.00666C3.45059 22 3 21.5554 3 20.9991L3.0026 7.00087C3.0027 6.44811 3.45264 6 4.00942 6H6.9998ZM5.00242 8L5.00019 20H14.9998V8H5.00242ZM8.9998 6H16.9998V16H18.9998V4H8.9998V6Z"/></svg>
<svg class="i" style="left:1037.85px;top:1141.00px" width="26.20" height="26.20" viewBox="0 0 24 24"><path fill="#9c9c9c"  d="M12 22C6.47715 22 2 17.5228 2 12C2 6.47715 6.47715 2 12 2C17.5228 2 22 6.47715 22 12C22 17.5228 17.5228 22 12 22ZM11 15V17H13V15H11ZM11 7V13H13V7H11Z"/></svg>
<div class="av" style="top:1121px"><svg width="64" height="64" viewBox="0 0 64 64"><defs><linearGradient id="eb" x1="0" y1="0" x2="0" y2="1"><stop offset="0" stop-color="#65798c"/><stop offset=".5" stop-color="#8ba3b8"/><stop offset="1" stop-color="#a9c3da"/></linearGradient><radialGradient id="eb2" cx=".9" cy=".7" r=".6"><stop offset="0" stop-color="#c6dcee"/><stop offset="1" stop-color="#c6dcee" stop-opacity="0"/></radialGradient></defs><rect width="64" height="64" fill="url(#eb)"/><rect width="64" height="64" fill="url(#eb2)"/><path d="M0 64V40L3 37L20 30L23 27L38 29L42 32L54 38Q57 42 58 48L62 58L60.500 64Z" fill="#20264d"/><path d="M22 28Q30 36 38 30L37 38Q30 42 23 37Z" fill="#1a1e40"/><path d="M33 40L31 64M20 38L30 64" stroke="#171a3a" stroke-width=".8" fill="none"/><path d="M0 40L3 37L8 48L4 64H0Z" fill="#2a3158"/><path d="M7 61L9.500 60.500L9 64H7ZM48 61L50.500 60L51 64H48.500Z" fill="#e8e4e8"/><path d="M24 26L37 26L37 33Q30 38 23 32Z" fill="#c99580"/><path d="M22 28Q29 35 38 29L38 33Q30 39 22 33Z" fill="#23264a"/><path d="M22.500 17Q22 6 31 5Q40 5.500 40.500 16L40 24Q38 31 33 33Q27 34 24 29Q22 24 22.500 17Z" fill="#dcae96"/><path d="M30 8Q37 8 39 14L38.500 22Q36 28 32 29Q34 20 30 8Z" fill="#eac6b0" opacity=".8"/><path d="M22.500 26Q25 32 31 33.500Q36 33 39 27Q37 33 32 35Q26 35 22.500 29Z" fill="#6b4a44" opacity=".75"/><path d="M21.500 16Q21.500 4 31 3Q38 3 41 8Q40 9 38 8Q33 5.500 27 8Q24 11 23.500 17L22.500 19Z" fill="#3b2c2c"/><path d="M20.500 17Q20 19 21.500 22L22.500 21V17Z" fill="#c99580"/><path d="M25 15.500H30M33.500 15H38" stroke="#4a3530" stroke-width=".9"/><path d="M25.500 17.200H29.500M34 16.800H37.500" stroke="#6a4c44" stroke-width=".8"/><path d="M31 17L30 22.500H33" stroke="#b98572" stroke-width=".7" fill="none"/><path d="M27.500 26.500Q31 27.500 34.500 26" stroke="#9c5f58" stroke-width=".9" fill="none"/></svg></div>
<div class="cb" style="top:1245px"></div>
<div class="pill" style="top:1241px;width:273.8px"></div>
<svg class="i" style="left:788.60px;top:1252.50px" width="26.50" height="26.50" viewBox="0 0 24 24"><path fill="#a6a6a6"  d="M6.9998 6V3C6.9998 2.44772 7.44752 2 7.9998 2H19.9998C20.5521 2 20.9998 2.44772 20.9998 3V17C20.9998 17.5523 20.5521 18 19.9998 18H16.9998V20.9991C16.9998 21.5519 16.5499 22 15.993 22H4.00666C3.45059 22 3 21.5554 3 20.9991L3.0026 7.00087C3.0027 6.44811 3.45264 6 4.00942 6H6.9998ZM5.00242 8L5.00019 20H14.9998V8H5.00242ZM8.9998 6H16.9998V16H18.9998V4H8.9998V6Z"/></svg>
<svg class="i" style="left:1053.60px;top:1253.00px" width="26.20" height="26.20" viewBox="0 0 24 24"><path fill="#9c9c9c"  d="M12 22C6.47715 22 2 17.5228 2 12C2 6.47715 6.47715 2 12 2C17.5228 2 22 6.47715 22 12C22 17.5228 17.5228 22 12 22ZM11 15V17H13V15H11ZM11 7V13H13V7H11Z"/></svg>
<div class="av" style="top:1233px"><svg width="64" height="64" viewBox="0 0 64 64"><rect width="64" height="64" fill="#88c4f0"/><path d="M12 55L17 54L16.500 64H12ZM40 56L46 55L45.500 64H40Z" fill="#f0b98f" stroke="#8a5e48" stroke-width=".4"/><path d="M11.500 56L12 46Q14 41 18 38.500L24 34L33.500 33L37 38L43.500 42Q46 46 47 55L40 57L40.500 64H16.500L17 55Z" fill="#775551" stroke="#4a3432" stroke-width=".5"/><path d="M22 37.500L29 37.500L23 49Z" fill="#f4f4f4"/><path d="M18 42L22 37L23 49M29 37.500L33.500 33.500L35 42L30 44M23 49V64" stroke="#4a3432" stroke-width=".5" fill="none"/><rect x="26.500" y="54" width="7" height="7.500" rx="1" fill="none" stroke="#5a3f3c" stroke-width=".6"/><path d="M22 30L31 32L30 38L23 38Z" fill="#e8ae86"/><path d="M16.500 14L34 13L35 22Q34.500 29 30 32.500Q25 35 21.500 32.500Q18.500 28 17.500 22Z" fill="#f2bc93" stroke="#8a5e48" stroke-width=".4"/><path d="M32.500 13L35.500 15.500Q36.500 19 35 23L33 20Z" fill="#d2834c"/><path d="M15 14Q15.500 8 17.500 5Q21 1.200 27 1.500Q33 2.500 34.500 8L35 12.500L33.500 13.500Q24 12.500 15 14Z" fill="#e0682f" stroke="#a8481e" stroke-width=".4"/><path d="M15 14Q24 11.500 33.500 13.500L29 14.500Q22 14 15 14Z" fill="#c85a26"/><ellipse cx="24" cy="6" rx="4.300" ry="2.600" transform="rotate(8 24 6)" fill="#3b3432"/><ellipse cx="24" cy="5.800" rx="2.600" ry="1.300" transform="rotate(8 24 6)" fill="#e9e4e0"/><ellipse cx="19.500" cy="19.800" rx="3.300" ry="2.700" fill="#c4ccd4" stroke="#7e858c" stroke-width=".7"/><ellipse cx="27.800" cy="19.800" rx="3.600" ry="2.700" fill="#c4ccd4" stroke="#7e858c" stroke-width=".7"/><path d="M31.500 19.500L35 18.500M22.800 19.500H24.200" stroke="#7e858c" stroke-width=".6"/><path d="M21.500 24.500Q22.500 26 24.500 25M21.500 28.500Q25 30 28.500 28" stroke="#9a6248" stroke-width=".6" fill="none"/></svg></div>
<div id="txt" style="position:absolute;left:0;top:0;width:100%;height:100%;will-change:transform">
<span class="t" style="left:209.90px;top:79px;font-size:27px;font-weight:400;color:#58585b;transform:scaleX(0.9993)">Search collections...</span>
<span class="t" style="left:189.92px;top:199px;font-size:27.5px;font-weight:700;color:#979797;transform:scaleX(0.9728)">Pinned</span>
<span class="t" style="left:255.88px;top:283px;font-size:31px;font-weight:400;color:#ececec;transform:scaleX(0.9320)">users</span>
<span class="t" style="left:255.92px;top:383px;font-size:31px;font-weight:400;color:#979797;transform:scaleX(0.9639)">posts</span>
<span class="t" style="left:189.95px;top:501px;font-size:27.5px;font-weight:700;color:#979797;transform:scaleX(0.9413)">Others</span>
<span class="t" style="left:255.25px;top:585px;font-size:31px;font-weight:400;color:#979797;transform:scaleX(0.9472)">badges</span>
<span class="t" style="left:255.99px;top:685px;font-size:31px;font-weight:400;color:#979797;transform:scaleX(0.9263)">pages</span>
<span class="t" style="left:256.94px;top:785px;font-size:31px;font-weight:400;color:#979797;transform:scaleX(0.9205)">searches</span>
<span class="t" style="left:257.14px;top:885px;font-size:31px;font-weight:400;color:#979797;transform:scaleX(0.9290)">tags</span>
<span class="t" style="left:311.67px;top:1009px;font-size:26.8px;font-weight:700;color:#e4e4e4;transform:scaleX(0.9728)">New collection</span>
<span class="t" style="left:670.39px;top:79px;font-size:37.5px;font-weight:400;color:#68686d;transform:scaleX(1.0167)">Collections</span>
<span class="t" style="left:916.20px;top:79px;font-size:37.5px;font-weight:400;color:#ececec;transform:scaleX(0.9748)">users</span>
<span class="t m" style="left:757.28px;top:228px;font-size:28.5px;font-weight:400;color:#717175;transform:scaleX(0.8482)">Search term or filter like created &gt; "2022-01-01"...</span>
<span class="t" style="left:809.92px;top:361px;font-size:28px;font-weight:700;color:#9e9e9e;transform:scaleX(0.9229)">id</span>
<span class="t" style="left:1163.71px;top:361px;font-size:28px;font-weight:700;color:#9e9e9e;transform:scaleX(0.9350)">username</span>
<span class="t" style="left:1566.97px;top:361px;font-size:28px;font-weight:700;color:#9e9e9e;transform:scaleX(0.9809)">email</span>
<span class="t" style="left:2072.74px;top:361px;font-size:28px;font-weight:700;color:#9e9e9e;transform:scaleX(0.9383)">avatar</span>
<span class="t" style="left:2271.78px;top:361px;font-size:28px;font-weight:700;color:#9e9e9e;transform:scaleX(0.9614)">name</span>
<span class="t" style="left:824.14px;top:470px;font-size:24.2px;font-weight:400;color:#e0e0e0;transform:scaleX(1.0110)">nf3ruk5m96z7oqe</span>
<span class="t" style="left:1125.36px;top:467px;font-size:27.2px;font-weight:400;color:#e6e6e6;transform:scaleX(0.9830)">princevegeta</span>
<span class="t" style="left:1528.45px;top:467px;font-size:27.2px;font-weight:400;color:#e6e6e6;transform:scaleX(0.9813)">vegeta@dbz.com</span>
<span class="t" style="left:2232.74px;top:467px;font-size:27.2px;font-weight:400;color:#e6e6e6;transform:scaleX(0.9296)">Vegeta</span>
<span class="t" style="left:824.14px;top:582px;font-size:24.2px;font-weight:400;color:#e0e0e0;transform:scaleX(1.0165)">gyglar48yerqcmw</span>
<span class="t" style="left:1125.45px;top:579px;font-size:27.2px;font-weight:400;color:#e6e6e6;transform:scaleX(1.0068)">stevefrombluesclues</span>
<span class="t" style="left:1528.45px;top:579px;font-size:27.2px;font-weight:400;color:#e6e6e6;transform:scaleX(0.9923)">steve@email.com</span>
<span class="t" style="left:2232.93px;top:579px;font-size:27.2px;font-weight:400;color:#e6e6e6;transform:scaleX(0.9601)">Steve</span>
<span class="t" style="left:824.11px;top:694px;font-size:24.2px;font-weight:400;color:#e0e0e0;transform:scaleX(1.0473)">lb3wwo7rwhvnc2t</span>
<span class="t" style="left:1125.12px;top:691px;font-size:27.2px;font-weight:400;color:#e6e6e6;transform:scaleX(1.0337)">picklerick</span>
<span class="t" style="left:1528.37px;top:691px;font-size:27.2px;font-weight:400;color:#e6e6e6;transform:scaleX(1.0338)">rick@rickandmorty.com</span>
<span class="t" style="left:2232.48px;top:691px;font-size:27.2px;font-weight:400;color:#e6e6e6;transform:scaleX(0.9547)">Rick Sanchez</span>
<span class="t" style="left:824.13px;top:806px;font-size:24.2px;font-weight:400;color:#e0e0e0;transform:scaleX(1.0211)">kb6n0ogctmyztew</span>
<span class="t" style="left:1125.10px;top:803px;font-size:27.2px;font-weight:400;color:#e6e6e6;transform:scaleX(1.0565)">morty</span>
<span class="t" style="left:1528.23px;top:803px;font-size:27.2px;font-weight:400;color:#e6e6e6;transform:scaleX(1.0232)">morty@email.com</span>
<span class="t" style="left:2232.35px;top:803px;font-size:27.2px;font-weight:400;color:#e6e6e6;transform:scaleX(1.0250)">Morty Smith</span>
<span class="t" style="left:824.13px;top:918px;font-size:24.2px;font-weight:400;color:#e0e0e0;transform:scaleX(1.0195)">h1obt3fgsybwfos</span>
<span class="t" style="left:1124.08px;top:915px;font-size:27.2px;font-weight:400;color:#e6e6e6;transform:scaleX(1.0383)">HankHill</span>
<span class="t" style="left:1528.23px;top:915px;font-size:27.2px;font-weight:400;color:#e6e6e6;transform:scaleX(1.0194)">hank@stricklandpropane.com</span>
<span class="t" style="left:2232.25px;top:915px;font-size:27.2px;font-weight:400;color:#e6e6e6;transform:scaleX(1.0020)">Hank</span>
<span class="t" style="left:824.17px;top:1030px;font-size:24.2px;font-weight:400;color:#e0e0e0;transform:scaleX(0.9798)">8czkln308sa15v8</span>
<span class="t" style="left:1124.24px;top:1027px;font-size:27.2px;font-weight:400;color:#e6e6e6;transform:scaleX(1.0150)">engageintellect</span>
<span class="t" style="left:1527.43px;top:1027px;font-size:27.2px;font-weight:400;color:#e6e6e6;transform:scaleX(1.0216)">engage_intellect@protonmail.com</span>
<span class="t" style="left:2233.25px;top:1027px;font-size:27.2px;font-weight:400;color:#e6e6e6;transform:scaleX(0.9905)">Josh Chadwick</span>
<span class="t" style="left:825.15px;top:1142px;font-size:24.2px;font-weight:400;color:#e0e0e0;transform:scaleX(0.9749)">s1d1u2ov5j267sx</span>
<span class="t" style="left:1124.23px;top:1139px;font-size:27.2px;font-weight:400;color:#e6e6e6;transform:scaleX(1.0223)">elonmusk</span>
<span class="t" style="left:1527.45px;top:1139px;font-size:27.2px;font-weight:400;color:#e6e6e6;transform:scaleX(1.0024)">elon@tesla.com</span>
<span class="t" style="left:2232.30px;top:1139px;font-size:27.2px;font-weight:400;color:#e6e6e6;transform:scaleX(0.9703)">Elon Musk</span>
<span class="t" style="left:824.16px;top:1254px;font-size:24.2px;font-weight:400;color:#e0e0e0;transform:scaleX(0.9931)">9p3gxzz993y7pmq</span>
<span class="t" style="left:1125.14px;top:1251px;font-size:27.2px;font-weight:400;color:#e6e6e6;transform:scaleX(1.0172)">rustyshackleford</span>
<span class="t" style="left:1527.45px;top:1251px;font-size:27.2px;font-weight:400;color:#e6e6e6;transform:scaleX(1.0010)">dale@dalesdeadbug.com</span>
<span class="t" style="left:2232.26px;top:1251px;font-size:27.2px;font-weight:400;color:#e6e6e6;transform:scaleX(0.9933)">Dale Gribble</span>
</div>
</body></html>
